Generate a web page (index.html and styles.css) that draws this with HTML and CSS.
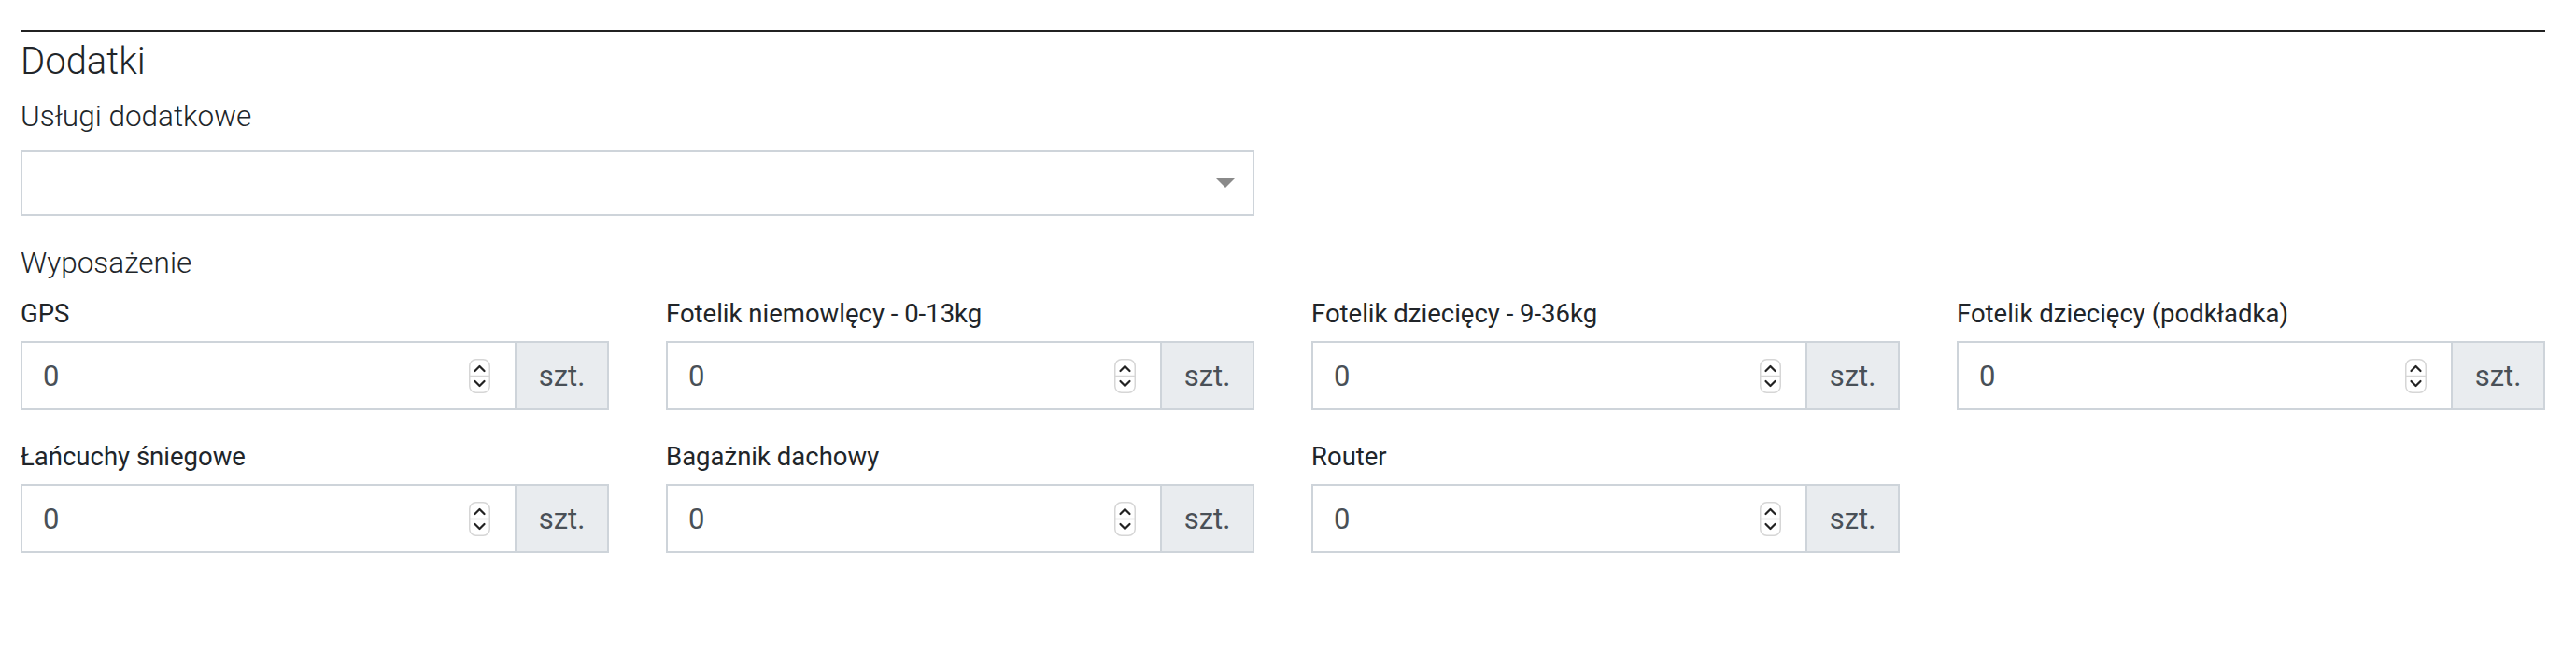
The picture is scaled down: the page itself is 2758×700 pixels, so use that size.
FILE: index.html
```html
<!DOCTYPE html>
<html lang="pl">
<head>
<meta charset="utf-8">
<title>Dodatki</title>
<link rel="stylesheet" href="styles.css">
</head>
<body>
<div class="page">
  <div class="rule"></div>
  <h5 class="title">Dodatki</h5>
  <div class="section-label">Usługi dodatkowe</div>
  <div class="select"><span class="select-arrow"></span></div>
  <div class="section-label section-gap">Wyposażenie</div>
  <div class="grid">
    <div class="field">
      <label class="field-label">GPS</label>
      <div class="input-group">
        <div class="num"><input class="num-input" type="text" value="0"><span class="spin"><svg width="23" height="37" viewBox="0 0 23 37"><rect x="0.75" y="0.75" width="21.5" height="35.5" rx="7" fill="#fff" stroke="#d6d6d6" stroke-width="1.5"/><line x1="1" y1="18.5" x2="22" y2="18.5" stroke="#d6d6d6" stroke-width="1.5"/><path d="M6.5 13 L11.5 8 L16.5 13" fill="none" stroke="#222" stroke-width="2.2" stroke-linecap="round" stroke-linejoin="round"/><path d="M6.5 24 L11.5 29 L16.5 24" fill="none" stroke="#222" stroke-width="2.2" stroke-linecap="round" stroke-linejoin="round"/></svg></span></div>
        <div class="addon">szt.</div>
      </div>
    </div>
    <div class="field">
      <label class="field-label">Fotelik niemowlęcy - 0-13kg</label>
      <div class="input-group">
        <div class="num"><input class="num-input" type="text" value="0"><span class="spin"><svg width="23" height="37" viewBox="0 0 23 37"><rect x="0.75" y="0.75" width="21.5" height="35.5" rx="7" fill="#fff" stroke="#d6d6d6" stroke-width="1.5"/><line x1="1" y1="18.5" x2="22" y2="18.5" stroke="#d6d6d6" stroke-width="1.5"/><path d="M6.5 13 L11.5 8 L16.5 13" fill="none" stroke="#222" stroke-width="2.2" stroke-linecap="round" stroke-linejoin="round"/><path d="M6.5 24 L11.5 29 L16.5 24" fill="none" stroke="#222" stroke-width="2.2" stroke-linecap="round" stroke-linejoin="round"/></svg></span></div>
        <div class="addon">szt.</div>
      </div>
    </div>
    <div class="field">
      <label class="field-label">Fotelik dziecięcy - 9-36kg</label>
      <div class="input-group">
        <div class="num"><input class="num-input" type="text" value="0"><span class="spin"><svg width="23" height="37" viewBox="0 0 23 37"><rect x="0.75" y="0.75" width="21.5" height="35.5" rx="7" fill="#fff" stroke="#d6d6d6" stroke-width="1.5"/><line x1="1" y1="18.5" x2="22" y2="18.5" stroke="#d6d6d6" stroke-width="1.5"/><path d="M6.5 13 L11.5 8 L16.5 13" fill="none" stroke="#222" stroke-width="2.2" stroke-linecap="round" stroke-linejoin="round"/><path d="M6.5 24 L11.5 29 L16.5 24" fill="none" stroke="#222" stroke-width="2.2" stroke-linecap="round" stroke-linejoin="round"/></svg></span></div>
        <div class="addon">szt.</div>
      </div>
    </div>
    <div class="field">
      <label class="field-label">Fotelik dziecięcy (podkładka)</label>
      <div class="input-group">
        <div class="num"><input class="num-input" type="text" value="0"><span class="spin"><svg width="23" height="37" viewBox="0 0 23 37"><rect x="0.75" y="0.75" width="21.5" height="35.5" rx="7" fill="#fff" stroke="#d6d6d6" stroke-width="1.5"/><line x1="1" y1="18.5" x2="22" y2="18.5" stroke="#d6d6d6" stroke-width="1.5"/><path d="M6.5 13 L11.5 8 L16.5 13" fill="none" stroke="#222" stroke-width="2.2" stroke-linecap="round" stroke-linejoin="round"/><path d="M6.5 24 L11.5 29 L16.5 24" fill="none" stroke="#222" stroke-width="2.2" stroke-linecap="round" stroke-linejoin="round"/></svg></span></div>
        <div class="addon">szt.</div>
      </div>
    </div>
    <div class="field">
      <label class="field-label">Łańcuchy śniegowe</label>
      <div class="input-group">
        <div class="num"><input class="num-input" type="text" value="0"><span class="spin"><svg width="23" height="37" viewBox="0 0 23 37"><rect x="0.75" y="0.75" width="21.5" height="35.5" rx="7" fill="#fff" stroke="#d6d6d6" stroke-width="1.5"/><line x1="1" y1="18.5" x2="22" y2="18.5" stroke="#d6d6d6" stroke-width="1.5"/><path d="M6.5 13 L11.5 8 L16.5 13" fill="none" stroke="#222" stroke-width="2.2" stroke-linecap="round" stroke-linejoin="round"/><path d="M6.5 24 L11.5 29 L16.5 24" fill="none" stroke="#222" stroke-width="2.2" stroke-linecap="round" stroke-linejoin="round"/></svg></span></div>
        <div class="addon">szt.</div>
      </div>
    </div>
    <div class="field">
      <label class="field-label">Bagażnik dachowy</label>
      <div class="input-group">
        <div class="num"><input class="num-input" type="text" value="0"><span class="spin"><svg width="23" height="37" viewBox="0 0 23 37"><rect x="0.75" y="0.75" width="21.5" height="35.5" rx="7" fill="#fff" stroke="#d6d6d6" stroke-width="1.5"/><line x1="1" y1="18.5" x2="22" y2="18.5" stroke="#d6d6d6" stroke-width="1.5"/><path d="M6.5 13 L11.5 8 L16.5 13" fill="none" stroke="#222" stroke-width="2.2" stroke-linecap="round" stroke-linejoin="round"/><path d="M6.5 24 L11.5 29 L16.5 24" fill="none" stroke="#222" stroke-width="2.2" stroke-linecap="round" stroke-linejoin="round"/></svg></span></div>
        <div class="addon">szt.</div>
      </div>
    </div>
    <div class="field">
      <label class="field-label">Router</label>
      <div class="input-group">
        <div class="num"><input class="num-input" type="text" value="0"><span class="spin"><svg width="23" height="37" viewBox="0 0 23 37"><rect x="0.75" y="0.75" width="21.5" height="35.5" rx="7" fill="#fff" stroke="#d6d6d6" stroke-width="1.5"/><line x1="1" y1="18.5" x2="22" y2="18.5" stroke="#d6d6d6" stroke-width="1.5"/><path d="M6.5 13 L11.5 8 L16.5 13" fill="none" stroke="#222" stroke-width="2.2" stroke-linecap="round" stroke-linejoin="round"/><path d="M6.5 24 L11.5 29 L16.5 24" fill="none" stroke="#222" stroke-width="2.2" stroke-linecap="round" stroke-linejoin="round"/></svg></span></div>
        <div class="addon">szt.</div>
      </div>
    </div>
  </div>
</div>
</body>
</html>
```

FILE: styles.css
```css
html, body {
  margin: 0;
  padding: 0;
  background: #ffffff;
}

body {
  font-family: Roboto, "Liberation Sans", Arial, sans-serif;
  color: #212529;
}

.page {
  padding: 32px 33px 0 22px;
}

.rule {
  height: 0;
  border-top: 2px solid #212121;
}

.title {
  margin: 8px 0 0 0;
  font-size: 40px;
  line-height: 48px;
  font-weight: 300;
}

.section-label {
  margin-top: 12px;
  font-size: 31.5px;
  line-height: 45px;
  font-weight: 300;
}

.section-gap {
  margin-top: 28px;
}

.select {
  box-sizing: border-box;
  width: calc(50% - 30.5px);
  height: 70px;
  margin-top: 14px;
  border: 2px solid #ced4da;
  display: flex;
  align-items: center;
  justify-content: flex-end;
  padding-right: 19px;
}

.select-arrow {
  width: 0;
  height: 0;
  border-top: 10px solid #8a8a8a;
  border-left: 10px solid transparent;
  border-right: 10px solid transparent;
}

.grid {
  margin-top: 13px;
  display: grid;
  grid-template-columns: repeat(4, 1fr);
  column-gap: 61px;
}

.field {
  margin-bottom: 31px;
}

.field-label {
  display: block;
  font-size: 27.5px;
  line-height: 38px;
  font-weight: 400;
  margin-bottom: 10px;
}

.input-group {
  display: flex;
  height: 74px;
}

.num {
  box-sizing: border-box;
  flex: 1;
  min-width: 0;
  display: flex;
  align-items: center;
  border: 2px solid #ced4da;
  padding: 0 26px 0 22px;
  background: #fff;
}

.num-input {
  flex: 1;
  min-width: 0;
  border: 0;
  outline: none;
  padding: 0;
  margin: 0;
  background: transparent;
  font-family: Roboto, "Liberation Sans", Arial, sans-serif;
  font-size: 31px;
  color: #495057;
}

.spin {
  display: flex;
  width: 23px;
  height: 37px;
}

.addon {
  box-sizing: border-box;
  width: 99px;
  display: flex;
  align-items: center;
  justify-content: center;
  background: #e9ecef;
  border: 2px solid #ced4da;
  border-left: 0;
  font-size: 31px;
  color: #495057;
}
```
